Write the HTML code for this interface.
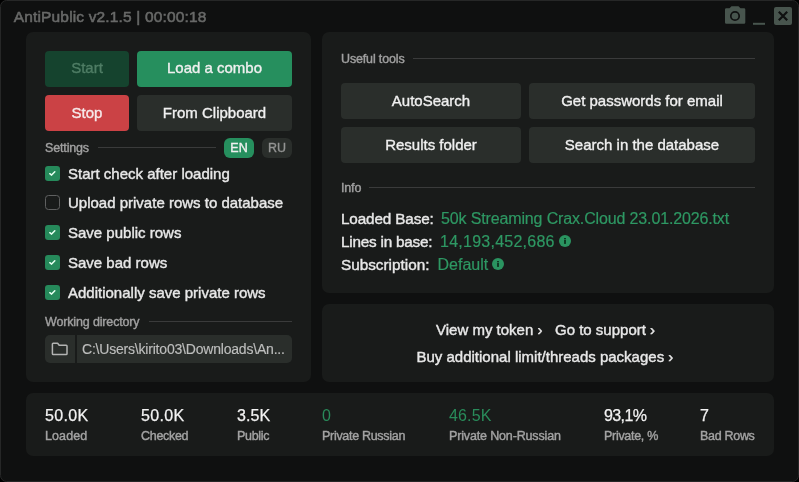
<!DOCTYPE html>
<html><head><meta charset="utf-8">
<style>
*{box-sizing:border-box;margin:0;padding:0}
html,body{width:799px;height:482px;overflow:hidden;background:#000}
body{font-family:"Liberation Sans",sans-serif;position:relative;will-change:transform}
.win{position:absolute;left:0;top:0;width:799px;height:482px;background:#0f1010;border:1px solid #262727;border-radius:6.5px}
.abs{position:absolute;white-space:nowrap}
.title{left:12.8px;top:7px;font-size:15.5px;font-weight:normal;color:#686968;letter-spacing:0.15px;-webkit-text-stroke:0.55px #686968}
.panel{position:absolute;background:#191b1a;border-radius:7px}
.btn{position:absolute;border-radius:4px;display:flex;align-items:center;justify-content:center;font-size:15px;color:#f0f0f0;padding-bottom:3px;-webkit-text-stroke:0.35px currentColor}
.lbl{position:absolute;font-size:12.5px;color:#a0a0a0;white-space:nowrap;-webkit-text-stroke:0.4px currentColor;letter-spacing:-0.15px}
.line{position:absolute;height:1px;background:#3a3b3b}
.cb{position:absolute;width:15px;height:15px;border-radius:3px;background:#268a5b}
.cb svg{position:absolute;left:0;top:0}
.cbo{background:transparent;border:1px solid #5f6060;border-radius:3.5px}
.cbt{position:absolute;font-size:15px;color:#e8e8e8;white-space:nowrap;-webkit-text-stroke:0.4px currentColor}
.sv{position:absolute;font-size:16px;color:#f2f2f2;white-space:nowrap;-webkit-text-stroke:0.25px currentColor}
.sl{position:absolute;font-size:12.5px;color:#a3a3a3;white-space:nowrap;-webkit-text-stroke:0.4px currentColor;letter-spacing:-0.3px}
.g{color:#2f9a63}
.sv.g{color:#298b5a;-webkit-text-stroke:0px}
.gv{position:absolute;font-size:16px;color:#2e9863;white-space:nowrap;letter-spacing:0px;-webkit-text-stroke:0.2px currentColor}
.info{position:absolute;width:11px;height:11px;border-radius:50%;background:#2f9a63}
</style></head><body>
<div class="win">
<div class="abs title">AntiPublic v2.1.5 | 00:00:18</div>
<svg class="abs" style="left:723px;top:4.2px" width="70" height="22" viewBox="724 5 70 22">
  <path d="M729.5 8.3 L731.5 6.2 L738.5 6.2 L740.5 8.3 L744 8.3 Q745.3 8.3 745.3 9.6 L745.3 22.5 Q745.3 23.8 744 23.8 L726.3 23.8 Q725 23.8 725 22.5 L725 9.6 Q725 8.3 726.3 8.3 Z" fill="#48554e"/>
  <circle cx="735" cy="16" r="4.2" fill="none" stroke="#0f1010" stroke-width="1.7"/>
  <rect x="753" y="22.8" width="12" height="2" fill="#48554e"/>
  <rect x="774" y="7" width="18" height="18" rx="2" fill="#48554e"/>
  <path d="M778.8 11.8 L787.2 20.2 M787.2 11.8 L778.8 20.2" stroke="#0f1010" stroke-width="2.2"/>
</svg>
</div>

<!-- left panel -->
<div class="panel" style="left:26px;top:32px;width:285px;height:349.5px"></div>
<div class="btn" style="left:45px;top:51px;width:84px;height:36px;background:#15432e;color:#4f7d65">Start</div>
<div class="btn" style="left:137px;top:51px;width:155px;height:36px;background:#268f5e">Load a combo</div>
<div class="btn" style="left:45px;top:95px;width:84px;height:36px;background:#cb4245;color:#f6e9ea;padding-bottom:2px">Stop</div>
<div class="btn" style="left:137px;top:95px;width:155px;height:36px;background:#2a2e2b;padding-bottom:2px">From Clipboard</div>
<div class="lbl" style="left:45px;top:140.5px">Settings</div>
<div class="line" style="left:98px;top:147px;width:118px"></div>
<div class="btn" style="left:224px;top:138px;width:30px;height:20px;background:#268f5e;font-size:12.5px;border-radius:6px;padding-bottom:1px">EN</div>
<div class="btn" style="left:262px;top:138px;width:30px;height:20px;background:#2a2e2b;font-size:12.5px;color:#939493;border-radius:6px;padding-bottom:1px">RU</div>

<div class="cb" style="left:45px;top:166px"><svg width="15" height="15"><path d="M4.8 7.7 L6.6 9.1 L9.8 5.7" fill="none" stroke="#e6fff0" stroke-width="1.5" stroke-linecap="round" stroke-linejoin="round"/></svg></div><div class="cbt" style="left:68px;top:164.5px">Start check after loading</div>
<div class="cb cbo" style="left:45px;top:195px"></div><div class="cbt" style="left:68px;top:193.5px">Upload private rows to database</div>
<div class="cb" style="left:45px;top:225px"><svg width="15" height="15"><path d="M4.8 7.7 L6.6 9.1 L9.8 5.7" fill="none" stroke="#e6fff0" stroke-width="1.5" stroke-linecap="round" stroke-linejoin="round"/></svg></div><div class="cbt" style="left:68px;top:223.5px">Save public rows</div>
<div class="cb" style="left:45px;top:255px"><svg width="15" height="15"><path d="M4.8 7.7 L6.6 9.1 L9.8 5.7" fill="none" stroke="#e6fff0" stroke-width="1.5" stroke-linecap="round" stroke-linejoin="round"/></svg></div><div class="cbt" style="left:68px;top:253.5px">Save bad rows</div>
<div class="cb" style="left:45px;top:285px"><svg width="15" height="15"><path d="M4.8 7.7 L6.6 9.1 L9.8 5.7" fill="none" stroke="#e6fff0" stroke-width="1.5" stroke-linecap="round" stroke-linejoin="round"/></svg></div><div class="cbt" style="left:68px;top:283.5px">Additionally save private rows</div>

<div class="lbl" style="left:45px;top:314.5px">Working directory</div>
<div class="line" style="left:149px;top:321px;width:143px"></div>
<div class="panel" style="left:45px;top:335px;width:247px;height:28px;background:#2a2e2b;border-radius:5px"></div>
<div class="abs" style="left:75px;top:335px;width:2px;height:28px;background:#191b1a"></div>
<svg class="abs" style="left:45px;top:335px" width="30" height="28" viewBox="45 335 30 28">
  <path d="M52.4 344 L52.4 353.8 Q52.4 354.6 53.2 354.6 L66.2 354.6 Q67 354.6 67 353.8 L67 346 Q67 345.2 66.2 345.2 L59.2 345.2 L57.6 343.2 L53.2 343.2 Q52.4 343.2 52.4 344 Z" fill="none" stroke="#b3b4b3" stroke-width="1.5" stroke-linejoin="round"/>
</svg>
<div class="abs" style="left:82px;top:340.5px;font-size:14px;color:#bdbebd;-webkit-text-stroke:0.15px #bdbebd;letter-spacing:-0.2px">C:\Users\kirito03\Downloads\An...</div>

<!-- right top -->
<div class="panel" style="left:322px;top:32px;width:452px;height:261px"></div>
<div class="lbl" style="left:341px;top:51.5px">Useful tools</div>
<div class="line" style="left:413px;top:58px;width:342px"></div>
<div class="btn" style="left:341px;top:83px;width:180px;height:35.5px;background:#2a2e2b;padding-bottom:1px">AutoSearch</div>
<div class="btn" style="left:529px;top:83px;width:226px;height:35.5px;background:#2a2e2b;padding-bottom:1px">Get passwords for email</div>
<div class="btn" style="left:341px;top:127px;width:180px;height:35.5px;background:#2a2e2b;padding-bottom:1px">Results folder</div>
<div class="btn" style="left:529px;top:127px;width:226px;height:35.5px;background:#2a2e2b;padding-bottom:1px">Search in the database</div>
<div class="lbl" style="left:341px;top:180.5px">Info</div>
<div class="line" style="left:369px;top:187px;width:386px"></div>
<div class="cbt" style="left:341px;top:209.5px;font-size:15.3px;letter-spacing:-0.15px">Loaded Base:</div><div class="gv" style="left:441px;top:209.6px;letter-spacing:-0.14px">50k Streaming Crax.Cloud 23.01.2026.txt</div>
<div class="cbt" style="left:341px;top:232.5px;font-size:15.3px;letter-spacing:-0.22px">Lines in base:</div><div class="gv" style="left:440px;top:232.6px;letter-spacing:0.25px">14,193,452,686</div>
<svg class="abs" style="left:559px;top:235px" width="12" height="12" viewBox="0 0 12 12"><circle cx="6" cy="6" r="6" fill="#2a9460"/><rect x="5" y="3" width="2" height="1.3" fill="#103a24"/><rect x="5" y="4.9" width="2" height="4" fill="#103a24"/></svg>
<div class="cbt" style="left:341px;top:255.5px;font-size:15.3px">Subscription:</div><div class="gv" style="left:437.5px;top:255.6px">Default</div>
<svg class="abs" style="left:492px;top:258px" width="12" height="12" viewBox="0 0 12 12"><circle cx="6" cy="6" r="6" fill="#2a9460"/><rect x="5" y="3" width="2" height="1.3" fill="#103a24"/><rect x="5" y="4.9" width="2" height="4" fill="#103a24"/></svg>

<!-- right bottom -->
<div class="panel" style="left:322px;top:304px;width:452px;height:77.5px"></div>
<div class="cbt" style="left:436px;top:320.7px">View my token ›</div>
<div class="cbt" style="left:555px;top:320.7px">Go to support ›</div>
<div class="cbt" style="left:416.5px;top:347.8px">Buy additional limit/threads packages ›</div>

<!-- stats -->
<div class="panel" style="left:26px;top:393px;width:748px;height:63px"></div>
<div class="sv" style="left:45px;top:407.3px;letter-spacing:0.35px">50.0K</div><div class="sl" style="left:45px;top:428.7px;letter-spacing:0.1px">Loaded</div>
<div class="sv" style="left:141px;top:407.3px;letter-spacing:0.35px">50.0K</div><div class="sl" style="left:141px;top:428.7px">Checked</div>
<div class="sv" style="left:237px;top:407.3px;letter-spacing:0.1px">3.5K</div><div class="sl" style="left:237px;top:428.7px">Public</div>
<div class="sv g" style="left:322px;top:407.3px">0</div><div class="sl" style="left:322px;top:428.7px">Private Russian</div>
<div class="sv g" style="left:449px;top:407.3px;letter-spacing:0.15px">46.5K</div><div class="sl" style="left:449px;top:428.7px;letter-spacing:-0.15px">Private Non-Russian</div>
<div class="sv" style="left:604px;top:407.3px;letter-spacing:-0.6px">93,1%</div><div class="sl" style="left:604px;top:428.7px">Private, %</div>
<div class="sv" style="left:700px;top:407.3px">7</div><div class="sl" style="left:700px;top:428.7px">Bad Rows</div>
</body></html>
